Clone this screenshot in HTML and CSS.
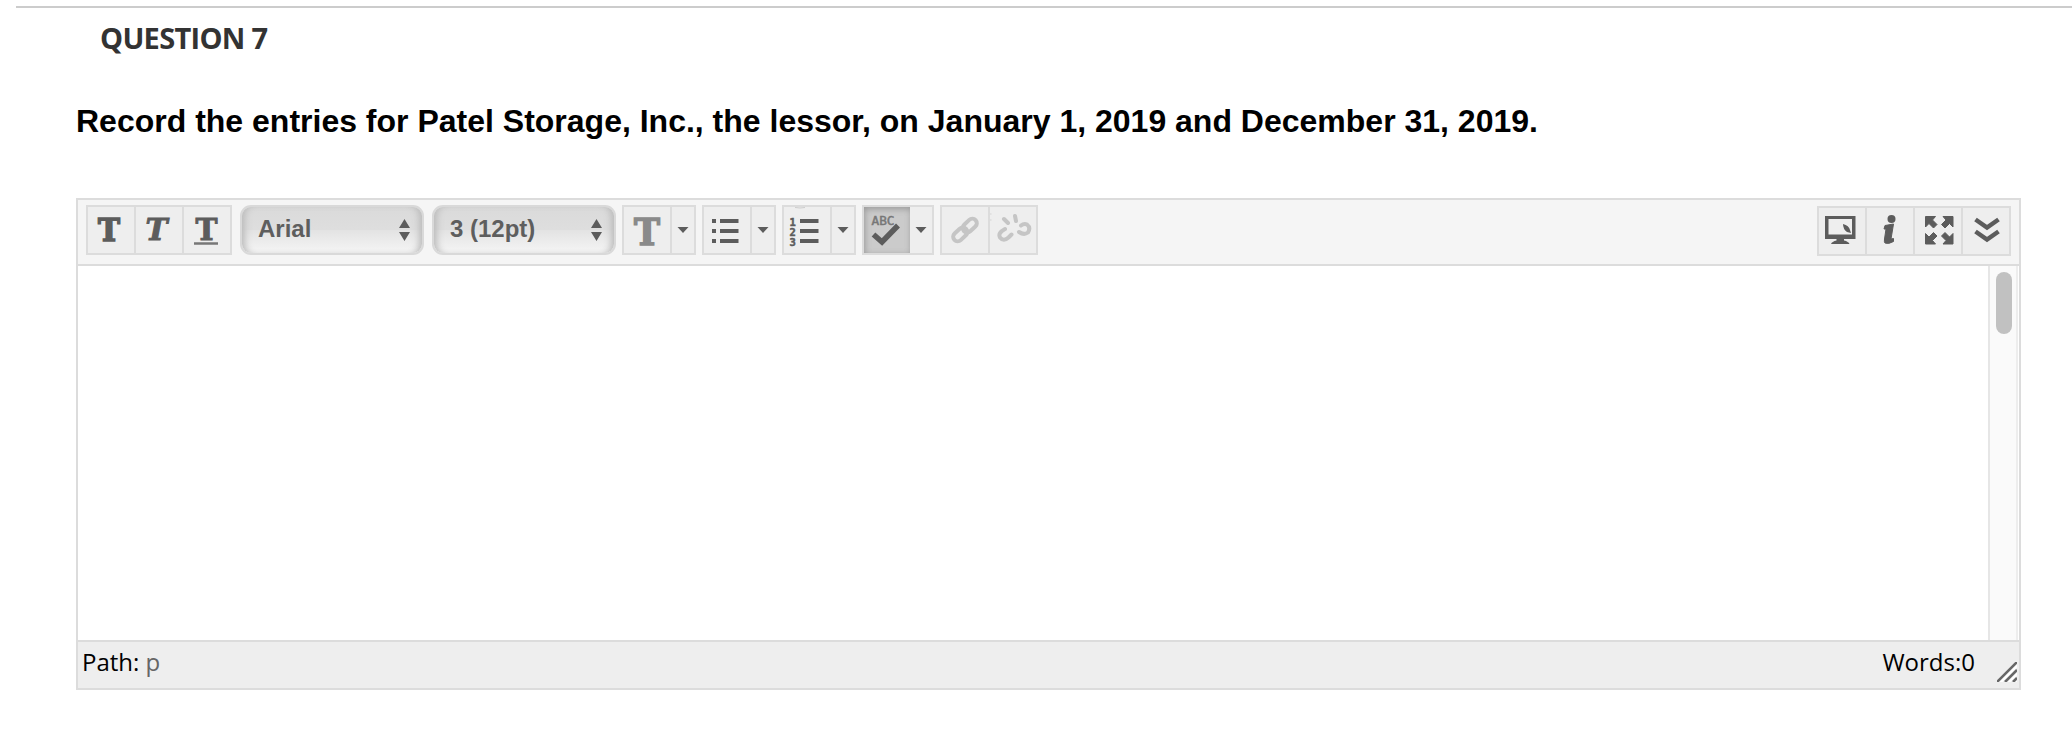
FILE: index.html
```html
<!DOCTYPE html>
<html lang="en">
<head>
<meta charset="utf-8">
<title>Question 7</title>
<link rel="stylesheet" href="styles.css">
</head>
<body>
<main class="question">
  <h3 class="question-title">QUESTION 7</h3>
  <p class="prompt">Record the entries for Patel Storage, Inc., the lessor, on January 1, 2019 and December 31, 2019.</p>
  <section class="editor">
    <div class="toolbar">
      <div class="group">
        <div class="btn"><svg viewBox="0 0 46 46"><text class="slab" x="10" y="33.500" font-size="31" textLength="22" lengthAdjust="spacingAndGlyphs">T</text></svg></div>
        <div class="btn"><svg viewBox="0 0 46 46"><text class="slab slant" x="9.500" y="33" font-size="30" textLength="22" lengthAdjust="spacingAndGlyphs">T</text></svg></div>
        <div class="btn"><svg viewBox="0 0 46 46"><text class="slab thin" x="11.500" y="32.500" font-size="30" textLength="22" lengthAdjust="spacingAndGlyphs">T</text><path d="M10 36.500h24" stroke="#777" stroke-width="2.500"/></svg></div>
      </div>
      <div class="select select-font"><span>Arial</span><svg class="arrows" viewBox="0 0 11 22"><path d="M0 9L5.500 0L11 9zM0 13h11L5.500 22z"/></svg></div>
      <div class="select select-size"><span>3 (12pt)</span><svg class="arrows" viewBox="0 0 11 22"><path d="M0 9L5.500 0L11 9zM0 13h11L5.500 22z"/></svg></div>
      <div class="group split">
        <div class="btn"><svg viewBox="0 0 46 46"><text class="slab pale" x="10" y="37.500" font-size="37" textLength="26" lengthAdjust="spacingAndGlyphs">T</text></svg></div>
        <div class="btn caret"><svg viewBox="0 0 22 46"><path d="M5.500 20h11l-5.500 6z"/></svg></div>
      </div>
      <div class="group split">
        <div class="btn"><svg viewBox="0 0 46 46"><path d="M8 12h4v4h-4zM8 22h4v4h-4zM8 32h4v4h-4zM16 12h18.500v4h-18.500zM16 22h18.500v4h-18.500zM16 32h18.500v4h-18.500z"/></svg></div>
        <div class="btn caret"><svg viewBox="0 0 22 46"><path d="M5.500 20h11l-5.500 6z"/></svg></div>
      </div>
      <div class="group split">
        <div class="btn"><svg viewBox="0 0 46 46"><path d="M11 .5q5 1 10 0" stroke="#ccc" stroke-width="1" fill="none"/><g class="digits"><text x="5.500" y="18.500">1</text><text x="5.500" y="28.500">2</text><text x="5.500" y="38.500">3</text></g><path d="M16 12h18.500v4h-18.500zM16 22h18.500v4h-18.500zM16 32h18.500v4h-18.500z"/></svg></div>
        <div class="btn caret"><svg viewBox="0 0 22 46"><path d="M5.500 20h11l-5.500 6z"/></svg></div>
      </div>
      <div class="group split spell">
        <div class="btn pressed"><svg viewBox="0 0 46 46"><text class="abc" x="7.500" y="18" textLength="23" lengthAdjust="spacingAndGlyphs">ABC</text><path d="M9.500 27.500l8.500 7.500L34 18.500" fill="none" stroke="#5c5c5c" stroke-width="5.500"/></svg></div>
        <div class="btn caret"><svg viewBox="0 0 22 46"><path d="M5.500 20h11l-5.500 6z"/></svg></div>
      </div>
      <div class="group">
        <div class="btn"><svg class="faint" viewBox="0 0 46 46"><g transform="rotate(-43 23 23)"><rect x="8.500" y="18.500" width="16" height="9" rx="4.500"/><rect x="21.500" y="18.500" width="16" height="9" rx="4.500"/></g></svg></div>
        <div class="btn"><svg class="faint" viewBox="0 0 46 46"><path d="M15 22q-7.500 4-5 8.500q3.500 4.500 8.500 0l3-3M29 25q5 3.500 9 .5q3-5-1-8q-3-1.500-6 1"/><path d="M14 12l4 4M25 9l1 5" stroke-width="4"/><path d="M0 7h1M0 13h1" stroke="#ddd" stroke-width="1.500"/></svg></div>
      </div>
      <div class="group group-right">
        <div class="btn"><svg viewBox="0 0 46 46"><path fill-rule="evenodd" d="M6 8h30.500v23H6zM9.500 11v15.500h23.500V11z"/><path d="M17.500 30h7.500v2.500q4.500 1 5.500 3.500H12q1-2.500 5.500-3.500zM24 16q6 1.500 7 6l1 3-4-1q-4-3-4-8z"/></svg></div>
        <div class="btn"><svg viewBox="0 0 46 46"><circle cx="24.500" cy="11" r="4"/><path d="M18 17.500l8.500-1.500l-2.500 15l2.500-.5v3q-5 3-8.500 1.500q-1-1-.5-4l1.500-10H17z" stroke="#5c5c5c"/></svg></div>
        <div class="btn"><svg viewBox="0 0 46 46"><path stroke="#5c5c5c" stroke-width="1" d="M10.500 8.500h10l-3 3.500l4.500 4.500l-3.500 3.500l-4.500-4.500l-3.500 3.500zM38 8.500H28l3 3.500l-4.500 4.500l3.500 3.500l4.500-4.500l3.500 3.500zM10.500 36h10l-3-3.500l4.500-4.500l-3.500-3.500l-4.500 4.500l-3.500-3.500zM38 36H28l3-3.500l-4.500-4.500l3.500-3.500l4.500 4.500l3.500-3.500z"/></svg></div>
        <div class="btn"><svg viewBox="0 0 46 46"><path d="M12.500 11.500l11.500 8l11.500-8M12.500 23.500l11.500 8l11.500-8" fill="none" stroke="#5c5c5c" stroke-width="4.500"/></svg></div>
      </div>
    </div>
    <div class="content">
      <div class="scrollbar"><div class="thumb"></div></div>
    </div>
    <div class="status">
      <div class="path">Path: <span class="path-node">p</span></div>
      <div class="words">Words:0</div>
      <svg class="resize" viewBox="0 0 20 20"><path d="M1 20L20 1M9 20L20 9M17 20l3-3" stroke="#fff" stroke-width="2" transform="translate(1.500 1.500)"/><path d="M0 20L20 0M8 20L20 8M16 20l4-4" stroke="#666" stroke-width="2.500"/></svg>
    </div>
  </section>
</main>
</body>
</html>
```
FILE: styles.css
```css
* { box-sizing: border-box; }
body { margin: 0; height: 746px; overflow: hidden; background: #fff; font-family: "Open Sans", sans-serif; }
.question { margin: 6px 0 0 16px; border-top: 2px solid #ccc; }
.question-title { margin: 10px 0 0 84px; height: 40px; line-height: 40px; font-size: 29px; font-weight: 700; color: #333; letter-spacing: -.7px; white-space: nowrap; }
.prompt { margin: 43px 0 0 60px; height: 40px; line-height: 40px; font-family: "Liberation Sans", Arial, sans-serif; font-size: 32px; font-weight: 700; color: #000; white-space: nowrap; }
.editor { margin: 57px 0 0 60px; width: 1945px; height: 492px; border: 2px solid #dcdcdc; display: flex; flex-direction: column; }
.toolbar { height: 66px; flex: none; display: flex; align-items: flex-start; padding: 5px 8px 0; background: #f5f5f5; border-bottom: 2px solid #dcdcdc; }
.group { display: flex; gap: 2px; height: 50px; border: 2px solid #dcdcdc; background: #dcdcdc; margin-right: 6px; flex: none; }
.btn { width: 46px; height: 46px; background: #eee; }
.btn.caret { width: 22px; }
.btn svg { display: block; width: 100%; height: 46px; fill: #5c5c5c; }
.group:first-child { margin-right: 8px; }
.spell { gap: 0; background: #eee; }
.pressed { background: #cbcbcb; box-shadow: inset 1px 2px 6px #999; }
.group-right { margin: 1px 0 0 auto; }
.slab { font-family: "DejaVu Serif", serif; font-weight: 700; stroke: #5c5c5c; stroke-width: 1.6px; }
.slant { font-style: italic; stroke-width: 1px; }
.slab.thin { stroke-width: 1px; }
.slab.pale { fill: #8a8a8a; stroke: #8a8a8a; }
.digits { font: 700 10.500px "DejaVu Sans Mono", monospace; stroke: #5c5c5c; stroke-width: .5px; }
.abc { font: 12.500px "DejaVu Sans Mono", monospace; fill: #777; stroke: #777; stroke-width: .5px; }
.btn .faint { fill: none; stroke: #c5c5c5; stroke-width: 4; stroke-linecap: round; }
.select { width: 184px; height: 50px; flex: none; display: flex; align-items: center; justify-content: space-between; padding: 0 12px 3px 16px; margin-right: 8px; border: 2px solid #d9d9d9; border-radius: 11px; background: linear-gradient(#dadada, #dedede 49%, #e3e3e3 51%, #f5f5f5); box-shadow: inset 7px 0 7px -4px #bbb, inset -7px 0 7px -4px #bbb; font: 700 24px "Liberation Sans", Arial, sans-serif; color: #5e5e5e; }
.select-size { margin-right: 6px; }
.arrows { width: 11px; height: 22px; fill: #5c5c5c; margin-top: 3px; }
.content { flex: 1; display: flex; justify-content: flex-end; padding-right: 1px; background: #fff; }
.scrollbar { width: 30px; border-left: 2px solid #e6e6e6; border-right: 2px solid #ededed; background: #fafafa; padding: 6px 0 0 6px; }
.thumb { width: 16px; height: 62px; border-radius: 8px; background: #c1c1c1; }
.status { height: 50px; flex: none; display: flex; border-top: 2px solid #dcdcdc; background: #eee; font-size: 24px; line-height: 40px; color: #000; padding-left: 4px; }
.status { height: 48px; }
.path-node { color: #666; }
.words { margin-left: auto; }
.resize { width: 20px; height: 20px; margin: 20px 2px 0 22px; }
```
